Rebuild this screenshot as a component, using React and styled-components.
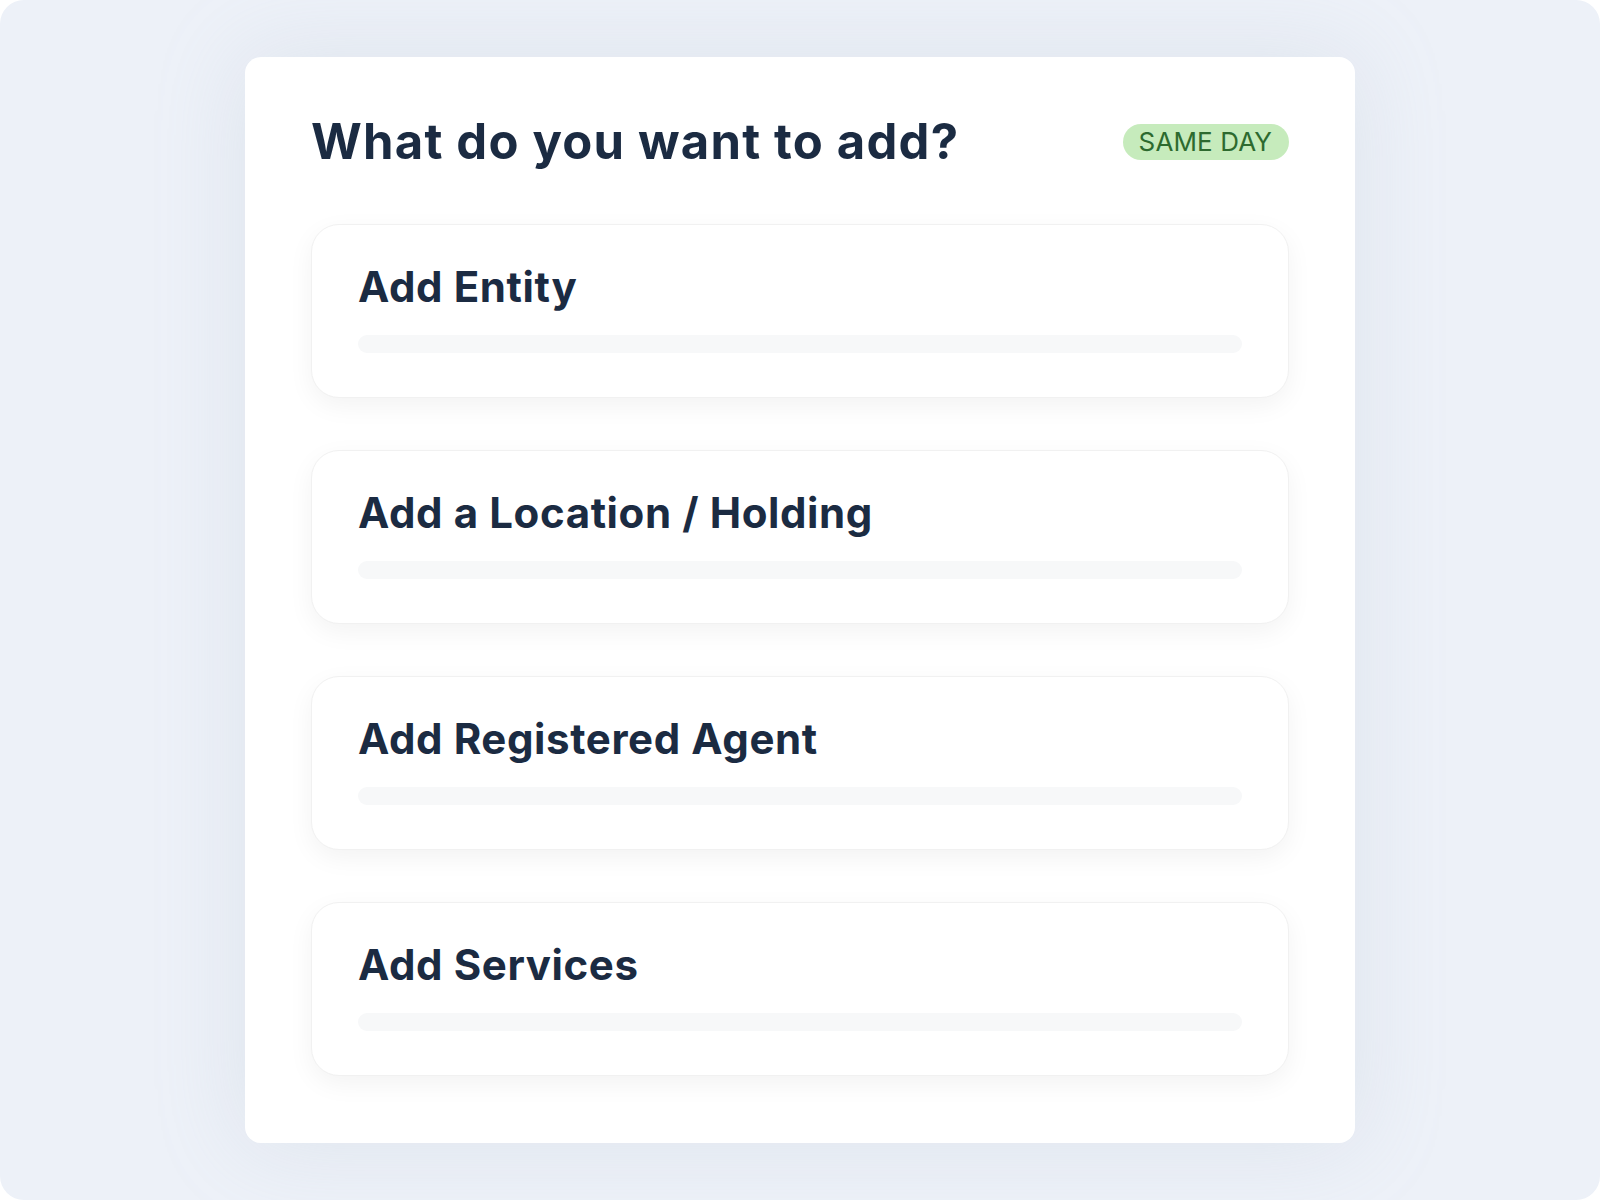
import React from 'react'
import styled, { createGlobalStyle } from 'styled-components'

const GlobalStyle = createGlobalStyle`
  html, body {
    margin: 0;
    padding: 0;
    background: #fff;
  }
  * {
    box-sizing: border-box;
  }
`

const Page = styled.div`
  display: flex;
  align-items: center;
  justify-content: center;
  height: 1200px;
  border-radius: 24px;
  background: #edf1f8;
  font-family: Inter, Lato, 'Noto Sans', sans-serif;
`

const Panel = styled.div`
  width: 1110px;
  padding: 60px 66px 67px;
  background: #fff;
  border-radius: 16px;
  box-shadow: 0 0 90px rgba(170, 182, 200, 0.22);
`

const Header = styled.div`
  display: flex;
  align-items: center;
  justify-content: space-between;
  margin-bottom: 58px;
`

const Title = styled.h1`
  margin: 0;
  font-size: 49px;
  line-height: 1;
  font-weight: 700;
  color: #1b2b42;
  letter-spacing: 1.2px;
`

const Badge = styled.span`
  display: inline-flex;
  align-items: center;
  height: 36px;
  padding: 0 17px 0 16px;
  border-radius: 18px;
  background: #c6ebbc;
  color: #2d6a2f;
  font-size: 26px;
  font-weight: 400;
  text-transform: uppercase;
  letter-spacing: 0.1px;
`

const List = styled.div`
  display: flex;
  flex-direction: column;
  gap: 52px;
`

const Option = styled.div`
  height: 174px;
  padding: 41px 46px 46px;
  background: #fff;
  border: 1px solid #f1f1f1;
  border-radius: 28px;
  box-shadow: 0 8px 26px rgba(0, 0, 0, 0.05);
  cursor: pointer;
`

const OptionTitle = styled.div`
  font-size: 42px;
  line-height: 1;
  font-weight: 700;
  color: #1b2b42;
  letter-spacing: 0.6px;
`

const Placeholder = styled.div`
  margin-top: 27px;
  height: 18px;
  border-radius: 9px;
  background: #f7f8f9;
`

const options = ['Add Entity', 'Add a Location / Holding', 'Add Registered Agent', 'Add Services']

const App = () => {
  return (
    <>
      <GlobalStyle />
      <Page>
        <Panel>
          <Header>
            <Title>What do you want to add?</Title>
            <Badge>Same day</Badge>
          </Header>
          <List>
            {options.map((item) => (
              <Option key={item}>
                <OptionTitle>{item}</OptionTitle>
                <Placeholder />
              </Option>
            ))}
          </List>
        </Panel>
      </Page>
    </>
  )
}

export default App
